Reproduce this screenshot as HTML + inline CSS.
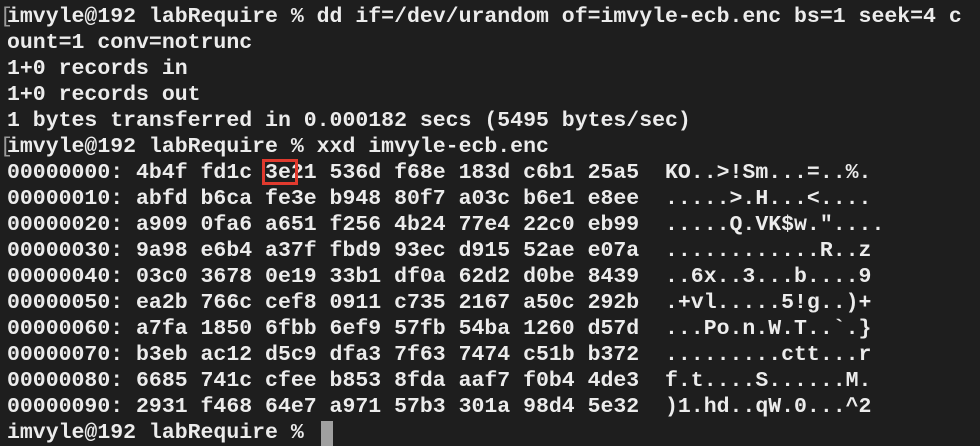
<!DOCTYPE html>
<html><head><meta charset="utf-8"><style>
html,body{margin:0;padding:0;background:#1e1e1e;width:980px;height:446px;overflow:hidden}
pre{margin:0;position:absolute;left:7px;top:4px;font-family:"Liberation Mono",monospace;font-size:21.5px;line-height:26px;color:#ececec;font-weight:bold;white-space:pre;letter-spacing:0}
.b{position:absolute;left:-7px;color:#9a9a9a;font-weight:normal}
.box{position:absolute;left:262px;top:159px;width:36px;height:26px;border:3px solid #e03a2e;box-sizing:border-box}
.cur{position:absolute;left:321px;top:421px;width:12px;height:25px;background:#a0a0a0}
</style></head><body>
<pre><span class="b">[</span>imvyle@192 labRequire % dd if=/dev/urandom of=imvyle-ecb.enc bs=1 seek=4 c
ount=1 conv=notrunc
1+0 records in
1+0 records out
1 bytes transferred in 0.000182 secs (5495 bytes/sec)
<span class="b">[</span>imvyle@192 labRequire % xxd imvyle-ecb.enc
00000000: 4b4f fd1c 3e21 536d f68e 183d c6b1 25a5  KO..&gt;!Sm...=..%.
00000010: abfd b6ca fe3e b948 80f7 a03c b6e1 e8ee  .....&gt;.H...&lt;....
00000020: a909 0fa6 a651 f256 4b24 77e4 22c0 eb99  .....Q.VK$w."....
00000030: 9a98 e6b4 a37f fbd9 93ec d915 52ae e07a  ............R..z
00000040: 03c0 3678 0e19 33b1 df0a 62d2 d0be 8439  ..6x..3...b....9
00000050: ea2b 766c cef8 0911 c735 2167 a50c 292b  .+vl.....5!g..)+
00000060: a7fa 1850 6fbb 6ef9 57fb 54ba 1260 d57d  ...Po.n.W.T..`.}
00000070: b3eb ac12 d5c9 dfa3 7f63 7474 c51b b372  .........ctt...r
00000080: 6685 741c cfee b853 8fda aaf7 f0b4 4de3  f.t....S......M.
00000090: 2931 f468 64e7 a971 57b3 301a 98d4 5e32  )1.hd..qW.0...^2
imvyle@192 labRequire % </pre>
<div class="box"></div>
<div class="cur"></div>
</body></html>
